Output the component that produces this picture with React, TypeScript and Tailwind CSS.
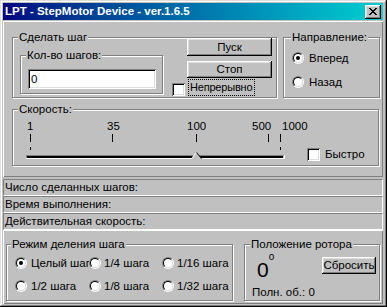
import React from "react";

const raised =
  "shadow-[inset_-1px_-1px_0_#000,inset_1px_1px_0_#fff,inset_-2px_-2px_0_#808080,inset_2px_2px_0_#dfdfdf]";
const sunken =
  "shadow-[inset_1px_1px_0_#808080,inset_-1px_-1px_0_#fff,inset_2px_2px_0_#000,inset_-2px_-2px_0_#dfdfdf]";

function Group({
  title,
  className,
  titleClass = "left-[5px]",
  children,
}: {
  title: string;
  className: string;
  titleClass?: string;
  children?: React.ReactNode;
}) {
  return (
    <div className={`relative shrink-0 border border-[#808080] shadow-[inset_1px_1px_0_#fff,1px_1px_0_#fff] ${className}`}>
      <span className={`absolute top-[-7px] px-[1px] bg-[#c0c0c0] leading-[13px] whitespace-nowrap ${titleClass}`}>
        {title}
      </span>
      {children}
    </div>
  );
}

function Radio({ checked }: { checked?: boolean }) {
  return (
    <span className="relative inline-block w-[12px] h-[12px] shrink-0 rounded-full border border-t-[#808080] border-l-[#808080] border-b-white border-r-white">
      <span className="absolute inset-0 flex items-center justify-center rounded-full border border-t-black border-l-black border-b-[#dfdfdf] border-r-[#dfdfdf] bg-white">
        {checked && <span className="w-[4px] h-[4px] rounded-full bg-black" />}
      </span>
    </span>
  );
}

function Check() {
  return <span className={`inline-block w-[13px] h-[13px] shrink-0 bg-white ${sunken}`} />;
}

function Button({ label, className }: { label: string; className: string }) {
  return (
    <div className={`flex items-center justify-center bg-[#c0c0c0] ${raised} ${className}`}>
      {label}
    </div>
  );
}

function RadioItem({ label, checked, className }: { label: string; checked?: boolean; className: string }) {
  return (
    <div className={`flex items-center whitespace-nowrap overflow-hidden ${className}`}>
      <Radio checked={checked} />
      <span>{label}</span>
    </div>
  );
}

function StatusRow({ label }: { label: string }) {
  return (
    <div className="h-[17px] flex items-center pl-[1px] border border-t-[#808080] border-l-[#808080] border-b-white border-r-white">
      {label}
    </div>
  );
}

function Trackbar() {
  const ticks = [17, 99, 183, 255, 267];
  return (
    <div className="relative w-[290px] h-[55px] shrink-0">
      <svg className="absolute left-0 top-0" width="290" height="55" viewBox="0 0 290 55" shapeRendering="crispEdges">
        {ticks.map((x) => (
          <rect key={x} x={x} y={24} width={1} height={8} fill="#000" />
        ))}
        <rect x={17} y={37} width={1} height={3} fill="#000" />
        <rect x={267} y={37} width={1} height={3} fill="#000" />
        {/* channel */}
        <rect x={13} y={45} width={258} height={1} fill="#808080" />
        <rect x={13} y={45} width={1} height={4} fill="#808080" />
        <rect x={14} y={46} width={256} height={2} fill="#000" />
        <rect x={13} y={48} width={259} height={1} fill="#fff" />
        <rect x={271} y={45} width={1} height={4} fill="#fff" />
      </svg>
      <svg className="absolute left-0 top-0" width="290" height="55" viewBox="0 0 290 55">
        <polygon points="178,49 183.5,42 189,49" fill="#c0c0c0" />
        <polyline points="178.5,48.5 183.5,42.5" stroke="#fff" strokeWidth="1" fill="none" />
        <polyline points="183.5,42.5 188.5,48.5" stroke="#000" strokeWidth="1" fill="none" />
      </svg>
      <span className="absolute left-[14px] top-[10px]">1</span>
      <span className="absolute left-[94px] top-[10px]">35</span>
      <span className="absolute left-[174px] top-[10px]">100</span>
      <span className="absolute left-[239px] top-[10px]">500</span>
      <span className="absolute left-[269px] top-[10px]">1000</span>
    </div>
  );
}

export default function App() {
  return (
    <div className="w-[387px] h-[307px] overflow-hidden flex flex-col bg-[#c0c0c0] p-[3px] pr-[4px] text-black text-[11.5px] leading-[13px] font-['Liberation_Sans',Arial,sans-serif] shadow-[inset_-1px_-1px_0_#000,inset_1px_1px_0_#dfdfdf,inset_-2px_-2px_0_#808080,inset_2px_2px_0_#fff]">
      {/* title bar */}
      <div className="h-[17px] shrink-0 flex items-center pl-[2px] pr-[2px] bg-linear-to-r from-[#000080] to-[#10d0d0]">
        <span className="text-white font-bold whitespace-nowrap">LPT - StepMotor Device - ver.1.6.5</span>
        <div className={`ml-auto w-[16px] h-[14px] flex items-center justify-center bg-[#c0c0c0] ${raised}`}>
          <svg width="8" height="7" viewBox="0 0 8 7" shapeRendering="crispEdges">
            <path
              d="M0 0h2v1h-2z M6 0h2v1h-2z M1 1h2v1h-2z M5 1h2v1h-2z M2 2h4v1h-4z M3 3h2v1h-2z M2 4h4v1h-4z M1 5h2v1h-2z M5 5h2v1h-2z M0 6h2v1h-2z M6 6h2v1h-2z"
              fill="#000"
            />
          </svg>
        </div>
      </div>

      {/* top panel */}
      <div className="mt-[1px] h-[156px] shrink-0 pl-[9px] pt-[16px] shadow-[inset_1px_1px_0_#fff,inset_-1px_-1px_0_#808080]">
        <div className="flex gap-[6px]">
          <Group title="Сделать шаг" className="w-[265px] h-[61px]">
            <div className="flex items-start">
              <Group title="Кол-во шагов:" className="ml-[7px] mt-[17px] w-[143px] h-[39px]">
                <div className={`ml-[7px] mt-[13px] w-[128px] h-[20px] flex items-center pl-[3px] bg-white ${sunken}`}>
                  0
                </div>
              </Group>
              <div className="ml-[9px] flex flex-col">
                <Button label="Пуск" className="ml-[15px] w-[85px] h-[18px]" />
                <Button label="Стоп" className="ml-[15px] mt-[5px] w-[85px] h-[17px]" />
                <div className="mt-[1px] flex items-start">
                  <span className="mt-[4px]">
                    <Check />
                  </span>
                  <div className="ml-[3px] w-[67px] h-[17px] flex items-center pl-[1px] border border-dotted border-black whitespace-nowrap text-[11px] tracking-[-0.2px]">
                    Непрерывно
                  </div>
                </div>
              </div>
            </div>
          </Group>
          <Group title="Направление:" className="w-[97px] h-[61px]" titleClass="left-[7px]">
            <div className="ml-[8px] mt-[14px] flex flex-col">
              <RadioItem label="Вперед" checked className="h-[12px] gap-[5px]" />
              <RadioItem label="Назад" className="h-[12px] gap-[5px] mt-[12px]" />
            </div>
          </Group>
        </div>
        <Group title="Скорость:" className="mt-[11px] w-[367px] h-[57px]">
          <div className="flex items-start">
            <Trackbar />
            <div className="mt-[38px] ml-[4px] h-[13px] flex items-center gap-[5px]">
              <Check />
              <span>Быстро</span>
            </div>
          </div>
        </Group>
      </div>

      {/* status rows */}
      <div className="mt-[2px] shrink-0 flex flex-col">
        <StatusRow label="Число сделанных шагов:" />
        <StatusRow label="Время выполнения:" />
        <StatusRow label="Действительная скорость:" />
      </div>

      {/* bottom panel */}
      <div className="flex-1 flex gap-[11px] pl-[3px] pt-[14px] shadow-[inset_1px_1px_0_#fff,inset_-1px_-1px_0_#808080]">
        <Group title="Режим деления шага" className="w-[227px] h-[57px]" titleClass="left-[4px]">
          <div className="ml-[8px] mt-[12px] flex flex-col">
            <div className="flex h-[12px]">
              <RadioItem label="Целый шаг" checked className="w-[74px] gap-[4px]" />
              <RadioItem label="1/4 шага" className="w-[73px] gap-[3px]" />
              <RadioItem label="1/16 шага" className="gap-[3px]" />
            </div>
            <div className="flex h-[12px] mt-[11px]">
              <RadioItem label="1/2 шага" className="w-[74px] gap-[4px]" />
              <RadioItem label="1/8 шага" className="w-[73px] gap-[3px]" />
              <RadioItem label="1/32 шага" className="gap-[3px]" />
            </div>
          </div>
        </Group>
        <Group title="Положение ротора" className="w-[136px] h-[57px]" titleClass="left-[5px]">
          <div className="flex flex-col">
            <div className="mt-[12px] h-[23px] flex items-start">
              <div className="ml-[12px] mt-[2px] flex items-start">
                <span className="text-[21px] leading-[21px]">0</span>
                <span className="text-[10px] leading-[10px] mt-[-7px]">o</span>
              </div>
              <Button label="Сбросить" className="ml-auto mr-[3px] w-[54px] h-[17px]" />
            </div>
            <div className="mt-[6px] pl-[7px]">Полн. об.: 0</div>
          </div>
        </Group>
      </div>
    </div>
  );
}
